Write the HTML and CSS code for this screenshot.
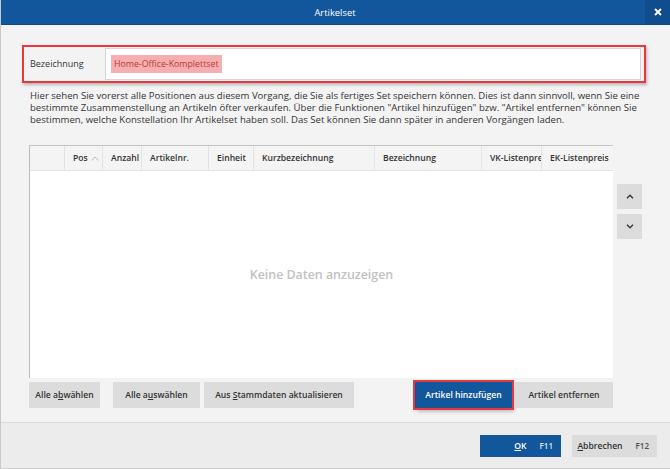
FILE: index.html
```html
<!DOCTYPE html>
<html lang="de">
<head>
    <meta charset="UTF-8">
    <title>Artikelset</title>
    <link rel="stylesheet" href="styles.css">
</head>
<body>
    <div class="dialog">
        <!-- Title bar -->
        <div class="titlebar">
            <span class="title">Artikelset</span>
            <button class="close" title="Schließen">
                <svg width="8" height="8" viewBox="0 0 8 8"><path d="M1 1 L7 7 M7 1 L1 7" stroke="#fff" stroke-width="1.8"/></svg>
            </button>
        </div>

        <div class="content">
            <div class="name-field marked">
                <label>Bezeichnung</label>
                <div class="name-input"><span class="hl">Home-Office-Komplettset</span></div>
            </div>

            <p class="hint">
                Hier sehen Sie vorerst alle Positionen aus diesem Vorgang, die Sie als fertiges Set speichern können. Dies ist dann sinnvoll, wenn Sie eine<br>
                bestimmte Zusammenstellung an Artikeln öfter verkaufen. Über die Funktionen "Artikel hinzufügen" bzw. "Artikel entfernen" können Sie<br>
                bestimmen, welche Konstellation Ihr Artikelset haben soll. Das Set können Sie dann später in anderen Vorgängen laden.
            </p>

            <div class="grid-row">
                <div class="grid">
                    <div class="grid-head">
                        <div class="col"></div>
                        <div class="col">Pos <svg class="sort" width="8" height="5" viewBox="0 0 8 5"><path d="M0.5 4.5 L4 1 L7.5 4.5" fill="none" stroke="#b8b8b8" stroke-width="1"/></svg></div>
                        <div class="col">Anzahl</div>
                        <div class="col">Artikelnr.</div>
                        <div class="col">Einheit</div>
                        <div class="col">Kurzbezeichnung</div>
                        <div class="col">Bezeichnung</div>
                        <div class="col">VK-Listenpreis</div>
                        <div class="col">EK-Listenpreis</div>
                    </div>
                    <div class="grid-empty">Keine Daten anzuzeigen</div>
                </div>
                <div class="move-buttons">
                    <button class="move">
                        <svg width="8" height="5" viewBox="0 0 8 5"><path d="M1 4.2 L4 1.2 L7 4.2" fill="none" stroke="#333" stroke-width="1.3"/></svg>
                    </button>
                    <button class="move">
                        <svg width="8" height="5" viewBox="0 0 8 5"><path d="M1 0.8 L4 3.8 L7 0.8" fill="none" stroke="#333" stroke-width="1.3"/></svg>
                    </button>
                </div>
            </div>

            <div class="actions">
                <button class="btn">Alle a<u>b</u>wählen</button>
                <button class="btn">Alle a<u>u</u>swählen</button>
                <button class="btn">Aus <u>S</u>tammdaten aktualisieren</button>
                <button class="btn primary marked-btn">Artikel hinzufügen</button>
                <button class="btn">Artikel entfernen</button>
            </div>
        </div>

        <!-- Footer -->
        <div class="footer">
            <button class="btn primary ok"><span><u>O</u>K</span><span class="key">F11</span></button>
            <button class="btn cancel"><span><u>A</u>bbrechen</span><span class="key">F12</span></button>
        </div>
    </div>
</body>
</html>
```

FILE: styles.css
```css
body {
    margin: 0;
    font-family: "Open Sans", "Noto Sans", sans-serif;
    font-size: 8.6px;
    color: #333;
    background: #f3f3f3;
}
.dialog {
    width: 670px;
    height: 469px;
    box-sizing: border-box;
    border-left: 1px solid #c9c9c9;
    border-bottom: 1px solid #d0d0d0;
    display: flex;
    flex-direction: column;
    background: #f3f3f3;
    overflow: hidden;
}
.titlebar {
    height: 25px;
    background-color: #12569b;
    border-bottom: 1px solid #0d4a86;
    box-sizing: border-box;
    display: flex;
    align-items: stretch;
    padding-left: 24px;
}
.title {
    flex: 1;
    text-align: center;
    color: white;
    font-size: 9.4px;
    line-height: 25px;
}
.close {
    width: 25px;
    border: none;
    padding: 0;
    background-color: #0f4d8c;
    display: flex;
    align-items: center;
    justify-content: center;
}
.content {
    flex: 1;
    padding: 20px 0 0 28px;
}
button {
    font-family: inherit;
    cursor: pointer;
}

/* Bezeichnung */
.name-field {
    display: flex;
    width: 624px;
    height: 38px;
    box-sizing: border-box;
    margin-left: -7px;
    padding: 1px 3px 1px 0;
    border: 2px solid #e8383d;
    box-shadow: 1px 2px 3px rgba(0, 0, 0, 0.25);
    align-items: stretch;
}
.name-field label {
    width: 81px;
    padding-left: 6px;
    box-sizing: border-box;
    line-height: 32px;
    font-size: 9px;
}
.name-input {
    flex: 1;
    background: white;
    border: 1px solid #d6d6d6;
    display: flex;
    align-items: center;
    padding-left: 5px;
}
.hl {
    background: #f6aeb0;
    color: #b83a3e;
    font-size: 8.8px;
    padding: 3px 3px;
}

.hint {
    margin: 7px 0 0 1px;
    font-size: 9.6px;
    line-height: 12px;
    white-space: nowrap;
}

/* Grid */
.grid-row {
    display: flex;
    margin-top: 19px;
    gap: 4px;
}
.grid {
    width: 584px;
    height: 233px;
    display: flex;
    flex-direction: column;
    background: white;
    border-left: 1px solid #bcbcbc;
    box-sizing: border-box;
}
.grid-head {
    display: grid;
    grid-template-columns: 35px 38px 39px 67px 45px 121px 107px 60px 1fr;
    height: 26px;
    background: #f4f4f4;
    border-top: 1px solid #c4c4c4;
    border-bottom: 1px solid #e2e2e2;
    box-sizing: border-box;
}
.col {
    border-right: 1px solid #e2e2e2;
    padding-left: 8px;
    font-weight: 600;
    line-height: 24px;
    white-space: nowrap;
    overflow: hidden;
    display: flex;
    align-items: center;
    gap: 3px;
}
.col:last-child {
    border-right: none;
}
.grid-empty {
    flex: 1;
    display: flex;
    align-items: center;
    justify-content: center;
    color: #c2c2c2;
    font-size: 12.4px;
    font-weight: 600;
}
.move-buttons {
    display: flex;
    flex-direction: column;
    gap: 5px;
    padding-top: 39px;
}
.move {
    width: 25px;
    height: 25px;
    border: none;
    background: #dcdcdc;
    display: flex;
    align-items: center;
    justify-content: center;
    padding: 0;
}

/* Buttons */
.actions {
    display: flex;
    gap: 13px;
    margin-top: 4px;
}
.btn {
    height: 26px;
    border: none;
    background: #dcdcdc;
    color: #333;
    font-size: 8.6px;
    font-weight: 600;
    padding: 0;
    white-space: nowrap;
}
.actions .btn:nth-child(1) { width: 71px; }
.actions .btn:nth-child(2) { width: 87px; }
.actions .btn:nth-child(3) { width: 150px; margin-left: -9px; }
.actions .btn:nth-child(4) { width: 97px; margin-left: 48px; }
.actions .btn:nth-child(5) { width: 98px; margin-left: -10px; }
.btn.primary {
    background-color: #12569b;
    color: white;
}
.marked-btn {
    outline: 2px solid #e8383d;
    outline-offset: 0;
    box-shadow: 2px 3px 4px rgba(0, 0, 0, 0.3);
}

/* Footer */
.footer {
    height: 45px;
    background: #ececec;
    border-top: 1px solid #dadada;
    display: flex;
    align-items: center;
    justify-content: flex-end;
    gap: 11px;
    padding-right: 13px;
}
.footer .btn {
    height: 22px;
    display: flex;
    align-items: center;
    justify-content: flex-end;
    gap: 13px;
    padding: 0 8px 0 0;
}
.ok {
    width: 81px;
}
.cancel {
    width: 85px;
}
.key {
    font-weight: 600;
    font-size: 8px;
    opacity: 0.85;
}
```
